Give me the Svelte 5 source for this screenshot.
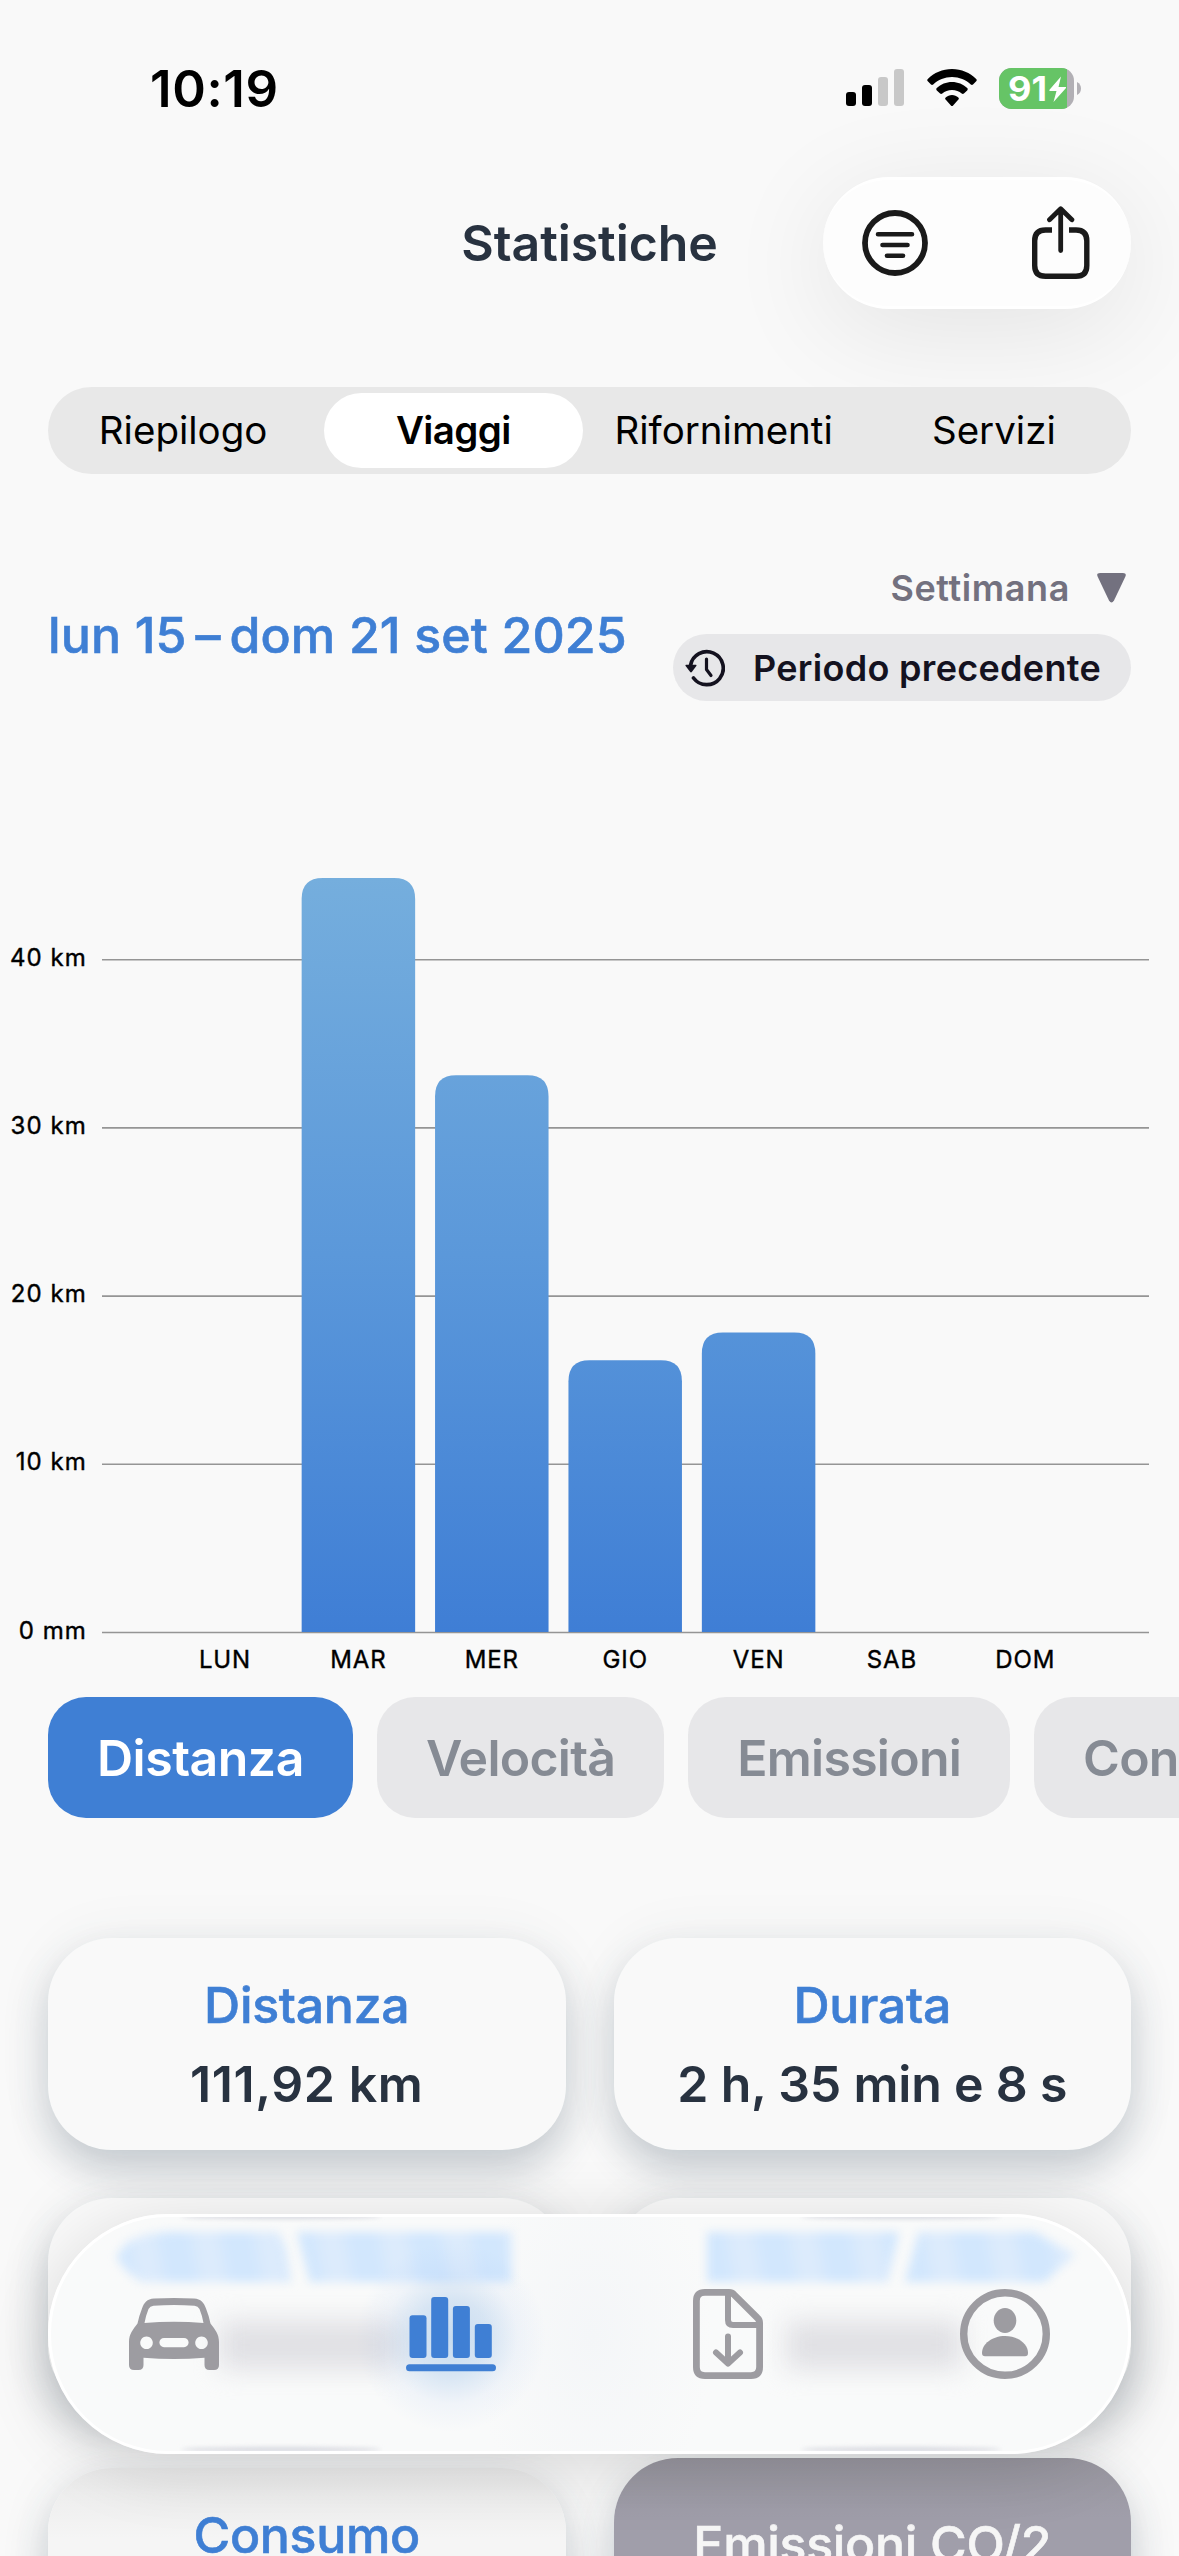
<script>
  let activeTab = "Viaggi";
  let activeMetric = "Distanza";

  const tabs = ["Riepilogo", "Viaggi", "Rifornimenti", "Servizi"];
  const metrics = ["Distanza", "Velocità", "Emissioni", "Consumo"];

  // km driven per day
  const days = [
    { label: "LUN", km: 0 },
    { label: "MAR", km: 44.83 },
    { label: "MER", km: 33.1 },
    { label: "GIO", km: 16.15 },
    { label: "VEN", km: 17.8 },
    { label: "SAB", km: 0 },
    { label: "DOM", km: 0 },
  ];
  const ticks = [0, 10, 20, 30, 40];

  // chart geometry
  const baseY = 931;
  const kmHeight = 16.82;
  const firstX = 225;
  const step = 133.4;
  const barWidth = 113.5;

  function barPath(i, km) {
    const x = firstX + i * step - barWidth / 2;
    const h = km * kmHeight;
    const r = 21;
    return `M${x} ${baseY}v${-(h - r)}q0 ${-r} ${r} ${-r}h${barWidth - 2 * r}q${r} 0 ${r} ${r}v${h - r}z`;
  }
</script>

<div class="screen">
  <div class="status">
    <span class="time">10:19</span>
    <div class="status-icons">
      <svg class="signal" width="58" height="38" viewBox="0 0 58 38">
        <rect x="0" y="23" width="10" height="14" rx="3" />
        <rect x="16" y="16" width="10" height="21" rx="3" />
        <rect x="32" y="8" width="10" height="29" rx="3" fill="#c8c8c8" />
        <rect x="48" y="0" width="10" height="37" rx="3" fill="#c8c8c8" />
      </svg>
      <svg class="wifi" width="50" height="38" viewBox="0 0 50 38">
        <path d="M25 0C34.500 0 43 3.800 49.200 10c.7.7.7 1.600 0 2.300l-3.200 3.200c-.6.6-1.500.6-2.200 0C38.800 10.800 32.300 8 25 8S11.200 10.800 6.200 15.500c-.7.6-1.600.6-2.200 0L.8 12.300c-.7-.7-.7-1.600 0-2.300C7 3.800 15.500 0 25 0z" />
        <path d="M25 13c5.800 0 11.200 2.300 15.200 6.100.7.7.7 1.600 0 2.300l-3.300 3.200c-.6.6-1.500.6-2.200 0C32.200 22.300 28.800 21 25 21s-7.200 1.300-9.700 3.600c-.7.6-1.600.6-2.200 0l-3.300-3.200c-.7-.7-.7-1.600 0-2.300C13.800 15.300 19.200 13 25 13z" />
        <path d="M25 26c2.400 0 4.600.9 6.300 2.400.7.700.7 1.500.1 2.200l-5.300 5.900c-.6.7-1.600.7-2.200 0l-5.300-5.900c-.6-.7-.6-1.500.1-2.200C20.400 26.900 22.600 26 25 26z" />
      </svg>
      <svg width="82" height="41" viewBox="0 0 82 41">
        <defs>
          <clipPath id="cell"><rect width="75" height="41" rx="12.500" /></clipPath>
        </defs>
        <g clip-path="url(#cell)">
          <rect width="75" height="41" fill="#b2b0b5" />
          <rect width="68" height="41" fill="#66c466" />
        </g>
        <path d="M78 14c3 1.500 4 4 4 6.500s-1 5-4 6.500z" fill="#b2b0b5" />
        <text x="9" y="33" class="percent" textLength="39" lengthAdjust="spacingAndGlyphs">91</text>
        <path d="M62 8.500L50.500 21.800c-.5.7-.2 1.200.5 1.200h6.500L54.500 34 66.800 20.200c.5-.7.2-1.200-.5-1.200h-6.800z" fill="#fff" />
      </svg>
    </div>
  </div>

  <header>
    <h1>Statistiche</h1>
    <div class="actions">
      <svg width="66" height="66" viewBox="0 0 66 66" fill="none" stroke="#1a1a1a" stroke-linecap="round">
        <circle cx="33" cy="33" r="30" stroke-width="5.800" />
        <path d="M16 24.300H50M20.500 35H45.500M25 45.700H41" stroke-width="4.600" />
      </svg>
      <svg width="58" height="74" viewBox="0 0 58 74" fill="none" stroke="#1a1a1a" stroke-width="5.400" stroke-linejoin="round">
        <path d="M20 24H13.500Q2.700 24 2.700 34.800V59.500Q2.700 70.300 13.500 70.300H44Q54.800 70.300 54.800 59.500V34.800Q54.800 24 44 24H37" />
        <path d="M28.700 4V44.500M17.500 13.800L28.700 2.800L39.900 13.800" stroke-width="4.800" stroke-linecap="round" />
      </svg>
    </div>
  </header>

  <nav class="segments">
    {#each tabs as tab}
      <button class:active={tab === activeTab} on:click={() => (activeTab = tab)}>{tab}</button>
    {/each}
  </nav>

  <section class="period">
    <h2>lun 15&thinsp;–&thinsp;dom 21 set 2025</h2>
    <div class="period-controls">
      <div class="range">
        <span>Settimana</span>
        <svg width="29" height="30" viewBox="0 0 29 30">
          <path d="M3 0H26Q30 0 28.300 3.800L17 27.500Q14.500 31.500 12 27.500L.7 3.800Q-1 0 3 0z" fill="#73717f" />
        </svg>
      </div>
      <button class="previous">
        <svg width="40" height="38" viewBox="0 0 40 38">
          <path d="M5.500 16.500A16.500 16.500 0 1 1 8.500 29" fill="none" stroke="#14121f" stroke-width="3.700" stroke-linecap="round" />
          <path d="M1 15.800H11Q12 16 11.300 17L7 22.800Q6 24 5 22.800L.6 17Q0 16 1 15.800z" fill="#14121f" />
          <path d="M21.500 10V20.500L26 26.500" fill="none" stroke="#14121f" stroke-width="3.200" stroke-linecap="round" stroke-linejoin="round" />
        </svg>
        <span>Periodo precedente</span>
      </button>
    </div>
  </section>

  <svg class="chart" width="1179" height="996" viewBox="0 0 1179 996">
    <defs>
      <linearGradient id="bar" gradientUnits="userSpaceOnUse" x1="0" y1="177" x2="0" y2="931">
        <stop offset="0" stop-color="#75aedd" />
        <stop offset="0.5" stop-color="#5b98da" />
        <stop offset="1" stop-color="#3f7ed5" />
      </linearGradient>
    </defs>
    {#each ticks as tick}
      <line x1="102" x2="1149" y1={baseY + 0.5 - tick * kmHeight} y2={baseY + 0.5 - tick * kmHeight} />
      <text x="87" y={baseY + 6.5 - tick * kmHeight} text-anchor="end">
        {tick === 0 ? "0 mm" : tick + " km"}
      </text>
    {/each}
    {#each days as day, i}
      {#if day.km > 0}
        <path d={barPath(i, day.km)} fill="url(#bar)" />
      {/if}
      <text class="day" x={firstX + i * step} y="967" text-anchor="middle">{day.label}</text>
    {/each}
  </svg>

  <div class="chips">
    {#each metrics as metric}
      <button class:selected={metric === activeMetric} on:click={() => (activeMetric = metric)}>
        {metric}
      </button>
    {/each}
  </div>

  <div class="cards">
    <div class="card">
      <h3>Distanza</h3>
      <p class="short">111,92 km</p>
    </div>
    <div class="card">
      <h3>Durata</h3>
      <p>2 h, 35 min e 8 s</p>
    </div>
    <div class="card"></div>
    <div class="card"></div>
    <div class="card low"><h3>Consumo</h3></div>
    <div class="card gray"><h3>Emissioni CO/2</h3></div>
  </div>

  <!-- floating glass bar -->
  <nav class="tabbar">
    <div class="glass">
      <i class="smear a1"></i>
      <i class="smear a2"></i>
      <i class="smear b1"></i>
      <i class="smear b2"></i>
      <i class="shade s1"></i>
      <i class="shade s2"></i>
      <i class="edge e1"></i>
      <i class="edge e2"></i>
      <i class="edge e3"></i>
      <i class="edge e4"></i>
      <i class="glow"></i>
    </div>
    <svg width="90" height="90" viewBox="0 -9 90 90" fill="#9d9ca1">
      <path fill-rule="evenodd" d="M25 .6Q45-.6 65 .6C72 1 75 5 77 10.500Q80 18 81.500 25.500C86 31.500 90 36 90 44V67Q90 72 85 72H80.500Q75.500 72 75.500 67V59.700Q45 62.300 14.500 59.700V67Q14.500 72 9.500 72H5Q0 72 0 67V44C0 36 4 31.500 8.500 25.500Q10 18 13 10.500C15 5 18 1 25 .6zM24.500 7.700Q21 8 19.500 11Q17 17 15.500 25Q45 22.500 74.500 25Q73 17 70.500 11Q69 8 65.500 7.700Q45 6.500 24.500 7.700zM17.500 38.500a6.300 6.300 0 1 0 .01 0zM72.500 38.500a6.300 6.300 0 1 0 .01 0zM35 40a4.600 4.600 0 0 0 0 9.200H55a4.600 4.600 0 0 0 0-9.200z" />
    </svg>
    <svg width="90" height="90" viewBox="0 0 90 90" fill="#3f7fd4">
      <rect x="3.500" y="26.300" width="17" height="42.700" rx="3" />
      <rect x="25.200" y="8" width="17" height="61" rx="3" />
      <rect x="46.900" y="17" width="17" height="52" rx="3" />
      <rect x="68.800" y="35" width="17" height="34" rx="3" />
      <rect x="0" y="75.300" width="90" height="7" rx="3.500" />
    </svg>
    <svg width="90" height="90" viewBox="-10 0 90 90" fill="none" stroke="#9d9ca1" stroke-width="6.800" stroke-linecap="round" stroke-linejoin="round">
      <path d="M12 3.400H36Q39 3.400 41 5.600L64.500 29Q66.600 31 66.600 34V78Q66.600 86.600 58 86.600H12Q3.400 86.600 3.400 78V12Q3.400 3.400 12 3.400z" />
      <path d="M35 5V31Q35 36 40 36H65" stroke-width="6" stroke-linecap="butt" />
      <path d="M35 47.500V73M23 63.500L35 74.500L47 63.500" stroke-width="6" />
    </svg>
    <svg width="90" height="90" viewBox="0 0 90 90" fill="#9d9ca1">
      <circle cx="45" cy="45" r="41.300" fill="none" stroke="#9d9ca1" stroke-width="7.400" />
      <ellipse cx="45" cy="31.500" rx="11.300" ry="12.500" />
      <path d="M22 64C22 55 32 47 45 47S68 55 68 64Q68 67.200 65 67.200H25Q22 67.200 22 64z" />
    </svg>
  </nav>
</div>

<style>
  :global(body) {
    margin: 0;
    background: #f9f9f9;
  }

  .screen {
    position: relative;
    width: 1179px;
    height: 2556px;
    overflow: hidden;
    background: #f9f9f9;
    font-family: Inter, "Liberation Sans", sans-serif;
    color: #283240;
  }

  button {
    border: none;
    background: none;
    padding: 0;
    font: inherit;
    cursor: pointer;
  }

  h1,
  h2,
  h3,
  p {
    margin: 0;
    white-space: nowrap;
  }

  svg {
    display: block;
    flex: none;
  }

  /* Status bar */
  .status {
    display: flex;
    align-items: center;
    justify-content: space-between;
    height: 176px;
    margin-bottom: 1px;
    padding: 0 98px 0 150px;
    color: #000;
  }

  .time {
    font-size: 51px;
    font-weight: 600;
    letter-spacing: 0.6px;
  }

  .status-icons {
    display: flex;
    align-items: center;
  }

  .signal {
    margin-right: 23px;
  }

  .wifi {
    margin-right: 22px;
  }

  .percent {
    font-size: 34px;
    font-weight: 700;
    fill: #fff;
  }

  /* Title row */
  header {
    display: grid;
    grid-template-columns: 1fr auto 1fr;
    align-items: center;
    height: 132px;
    padding: 0 48px;
  }

  h1 {
    grid-column: 2;
    font-size: 50px;
    font-weight: 600;
    letter-spacing: -0.1px;
  }

  .actions {
    justify-self: end;
    box-sizing: border-box;
    display: flex;
    align-items: center;
    justify-content: space-between;
    width: 308px;
    height: 132px;
    padding: 0 41px 0 39px;
    border: 3px solid #fff;
    border-width: 3px 0;
    border-radius: 66px;
    background: #fdfdfd;
    box-shadow: 0 20px 110px rgba(0, 0, 0, 0.09);
  }

  /* Segmented control */
  .segments {
    position: relative;
    display: grid;
    grid-template-columns: repeat(4, 1fr);
    box-sizing: border-box;
    margin: 78px 48px 0;
    padding-right: 2px;
    height: 87px;
    border-radius: 44px;
    background: #e8e8e8;
  }

  .segments button {
    margin: 6px;
    padding-bottom: 2px;
    border-radius: 38px;
    font-size: 38.5px;
    letter-spacing: 0;
    color: #000;
  }

  .segments .active {
    background: #fff;
    font-weight: 600;
    letter-spacing: -0.6px;
  }

  /* Period */
  .period {
    display: flex;
    align-items: center;
    justify-content: space-between;
    margin: 95px 48px 0;
    height: 132px;
  }

  h2 {
    font-size: 50px;
    font-weight: 500;
    letter-spacing: 0.15px;
    color: #3f7fd4;
    -webkit-text-stroke: 0.6px currentColor;
  }

  .period-controls {
    display: flex;
    flex-direction: column;
    align-items: flex-end;
    gap: 27px;
  }

  .range {
    display: flex;
    align-items: center;
    gap: 27px;
    height: 38px;
    margin-right: 5px;
    font-size: 36px;
    font-weight: 600;
    letter-spacing: 0.6px;
    color: #73717f;
  }

  .previous {
    box-sizing: border-box;
    display: flex;
    align-items: center;
    width: 458px;
    height: 67px;
    padding-left: 12px;
    gap: 28px;
    border-radius: 34px;
    background: #e7e7e9;
    color: #14121f;
    font-size: 36px;
    font-weight: 600;
    letter-spacing: 0.3px;
    line-height: 64px;
    white-space: nowrap;
  }

  /* Chart */
  .chart line {
    stroke: #959595;
    stroke-width: 1.6;
  }

  .chart text {
    font-size: 24px;
    letter-spacing: 1.1px;
    fill: #000;
    stroke: #000;
    stroke-width: 0.4px;
  }

  .chart .day {
    letter-spacing: 0.9px;
  }

  /* Metric chips */
  .chips {
    display: flex;
    gap: 24px;
    padding-left: 48px;
    overflow: hidden;
  }

  .chips button {
    flex: none;
    height: 121px;
    padding: 0 49px;
    border-radius: 38px;
    background: #e7e7e9;
    color: #868b94;
    font-size: 50px;
    font-weight: 600;
    letter-spacing: -0.75px;
  }

  .chips .selected {
    background: #3f7fd4;
    color: #fff;
    letter-spacing: -0.5px;
  }

  /* Cards */
  .cards {
    display: grid;
    grid-template-columns: 1fr 1fr;
    gap: 48px;
    padding: 120px 48px 0;
  }

  .card {
    box-sizing: border-box;
    display: flex;
    flex-direction: column;
    align-items: center;
    gap: 19px;
    height: 212px;
    padding-top: 37px;
    border-radius: 64px;
    background: #f9f9f9;
    box-shadow: 0 20px 38px rgba(50, 70, 90, 0.24), 0 0 60px rgba(60, 90, 80, 0.06);
  }

  h3 {
    font-size: 50px;
    line-height: 60px;
    font-weight: 500;
    letter-spacing: -0.3px;
    color: #3f7fd4;
    -webkit-text-stroke: 0.6px currentColor;
  }

  .card p {
    font-size: 50px;
    line-height: 60px;
    font-weight: 600;
    letter-spacing: -0.2px;
  }

  .card .short {
    letter-spacing: 0.6px;
  }

  .card.low {
    margin-top: 10px;
    background: linear-gradient(#e9e9e9, #f5f5f5 70px);
  }

  .card.gray {
    height: 232px;
    padding-top: 56px;
    background: linear-gradient(#98969f, #a09eaa 60px);
  }

  .gray h3 {
    color: #f6f6f6;
  }

  /* Tab bar */
  .tabbar {
    position: absolute;
    left: 48px;
    top: 2214px;
    box-sizing: border-box;
    display: flex;
    align-items: center;
    justify-content: space-between;
    width: 1083px;
    height: 240px;
    padding: 0 81px;
    border-radius: 120px;
    box-shadow: 0 12px 70px rgba(0, 0, 0, 0.14);
  }

  .tabbar svg {
    position: relative;
  }

  .glass {
    position: absolute;
    inset: 0;
    box-sizing: border-box;
    overflow: hidden;
    border: 3px solid #fff;
    border-radius: 120px;
    background: radial-gradient(ellipse 120px 190px at 541px 120px, #f4f6f8, #f9fafa);
  }

  /* soft shapes showing through the glass */
  .glass i {
    position: absolute;
    display: block;
  }

  .smear {
    top: 15px;
    height: 50px;
    filter: blur(5px);
  }

  .smear::before {
    content: "";
    position: absolute;
    inset: 0;
    background: repeating-linear-gradient(80deg, #d2e7fd 0 20px, #dcebfc 34px 48px, #d2e7fd 62px);
    clip-path: var(--shape);
  }

  .a1 {
    --shape: polygon(20% 5%, 32% 0, 93% 0, 97% 30%, 100% 100%, 18% 100%, 10% 80%, 4% 50%, 10% 20%);
    left: 58px;
    width: 182px;
  }

  .a2 {
    --shape: polygon(0 0, 100% 0, 100% 100%, 6% 100%);
    left: 246px;
    width: 215px;
  }

  .b1 {
    --shape: polygon(0 0, 100% 0, 94% 100%, 0 100%);
    left: 656px;
    width: 192px;
  }

  .b2 {
    --shape: polygon(8% 0, 76% 0, 100% 45%, 82% 100%, 0 100%);
    left: 854px;
    width: 170px;
  }

  .shade {
    top: 104px;
    height: 48px;
    background: #e0e0e4;
    filter: blur(13px);
  }

  .s1 {
    left: 168px;
    width: 180px;
  }

  .s2 {
    left: 735px;
    width: 176px;
  }

  .edge {
    width: 200px;
    height: 5px;
    border-radius: 50%;
    background: #d8d9e0;
    filter: blur(2px);
  }

  .e1 {
    left: 130px;
    top: -3px;
  }

  .e2 {
    left: 750px;
    top: -3px;
  }

  .e3 {
    left: 130px;
    bottom: -1px;
  }

  .e4 {
    left: 750px;
    bottom: -1px;
  }

  .glow {
    left: 305px;
    top: 25px;
    width: 190px;
    height: 190px;
    background: radial-gradient(closest-side, rgba(85, 150, 215, 0.3), rgba(95, 155, 220, 0.22) 40%, rgba(120, 165, 235, 0.07) 70%, rgba(130, 170, 240, 0));
  }
</style>
